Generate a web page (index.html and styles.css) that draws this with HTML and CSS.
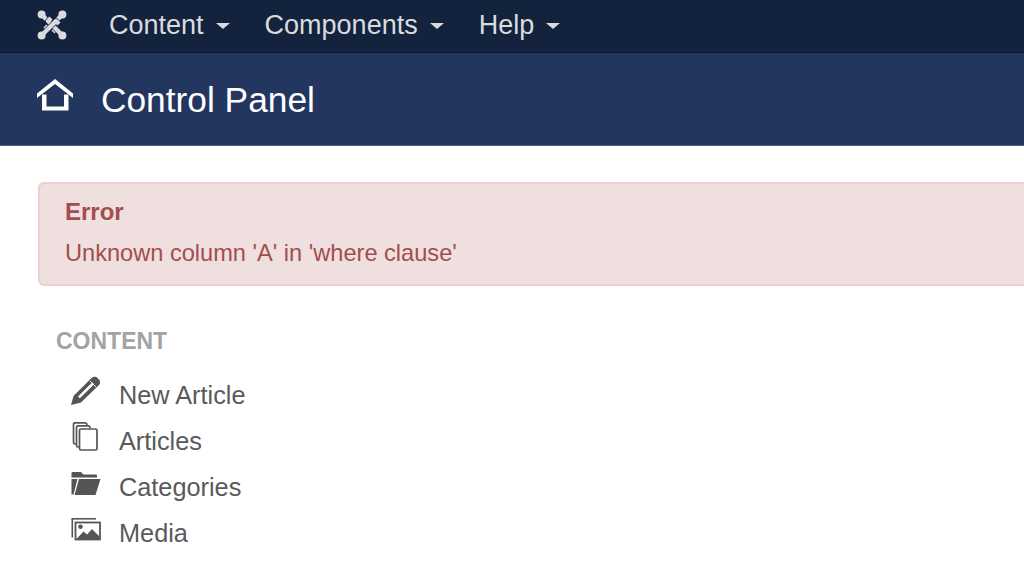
FILE: index.html
```html
<!DOCTYPE html>
<html lang="en">
<head>
    <meta charset="UTF-8">
    <title>Control Panel</title>
    <link rel="stylesheet" href="styles.css">
</head>
<body>
<div class="navbar">
    <a class="brand" href="#">
        <svg class="brand_icon" viewBox="0 0 30 30">
            <g fill="none" stroke-linejoin="round">
                <path d="M5 5 L19 19 L16 22" stroke="#14233d" stroke-width="5.6"/>
                <path d="M5 5 L19 19 L16 22" stroke="#d9dbdf" stroke-width="4.4"/>
                <path d="M25 5 L11 19 L8 16" stroke="#14233d" stroke-width="5.6"/>
                <path d="M25 5 L11 19 L8 16" stroke="#d9dbdf" stroke-width="4.4"/>
                <path d="M25 25 L11 11 L14 8" stroke="#14233d" stroke-width="5.6"/>
                <path d="M25 25 L11 11 L14 8" stroke="#d9dbdf" stroke-width="4.4"/>
                <path d="M5 25 L19 11 L22 14" stroke="#14233d" stroke-width="5.6"/>
                <path d="M5 25 L19 11 L22 14" stroke="#d9dbdf" stroke-width="4.4"/>
            </g>
            <g fill="#d9dbdf">
                <circle cx="4.6" cy="4.6" r="4"/>
                <circle cx="25.4" cy="4.6" r="4"/>
                <circle cx="4.6" cy="25.4" r="4"/>
                <circle cx="25.4" cy="25.4" r="4"/>
            </g>
        </svg>
    </a>
    <ul class="nav_menu">
        <li><a href="#">Content<span class="caret"></span></a></li>
        <li><a href="#">Components<span class="caret"></span></a></li>
        <li><a href="#">Help<span class="caret"></span></a></li>
    </ul>
</div>
<div class="subhead">
    <svg class="home_icon" viewBox="0 0 36 32">
        <path d="M0 14.5 L18 0 L36 14.5 V19 L18 5 L0 19 Z" fill="#fff"/>
        <path d="M5 15.5 H9.5 V27.5 H27 V15.5 H31.5 V31.5 H5 Z" fill="#fff"/>
    </svg>
    <h1 class="page_title">Control Panel</h1>
</div>
<div class="content">
    <div class="alert">
        <h4 class="alert_heading">Error</h4>
        <p class="alert_message">Unknown column 'A' in 'where clause'</p>
    </div>
    <div class="quick_icons">
        <h2 class="quick_title">CONTENT</h2>
        <ul class="quick_list">
            <li>
                <svg class="quick_icon" viewBox="0 0 30 30">
                    <path d="M0 29 L2.5 20 L20.5 2 Q23 0 25.5 1 L28.5 4 Q30 6.5 28 9 L10 26.5 Z M7 20.5 L8.8 22.3 L23 8.2 L21.2 6.4 Z" fill="#555" fill-rule="evenodd"/>
                    <path d="M19 5 L25 11" stroke="#fff" stroke-width="0.9"/>
                </svg>
                <a href="#">New Article</a>
            </li>
            <li>
                <svg class="quick_icon" viewBox="0 0 30 30">
                    <g fill="#fff" stroke="#555" stroke-width="1.7">
                        <path d="M6 22 H4 Q2.5 22 2.5 20.5 V2 Q2.5 0.8 4 0.8 H14 Q16 0.8 16 3"/>
                        <path d="M9 25 H7 Q5.5 25 5.5 23.5 V5 Q5.5 3.8 7 3.8 H17 Q19 3.8 19 6"/>
                        <rect x="8.5" y="7" width="17.5" height="21" rx="1.5"/>
                    </g>
                </svg>
                <a href="#">Articles</a>
            </li>
            <li>
                <svg class="quick_icon" viewBox="0 0 30 30">
                    <path d="M0.5 5 Q0.5 4 2 4 H10 L12.5 6.5 H25 Q26 6.5 26 7.5 V9.5 H0.5 Z" fill="#555"/>
                    <path d="M0.5 11 V26.5 H2.5 L6.5 11 Z" fill="#555"/>
                    <path d="M8 11 H29.5 L24.5 27 H3.5 Z" fill="#555"/>
                </svg>
                <a href="#">Categories</a>
            </li>
            <li>
                <svg class="quick_icon" viewBox="0 0 30 30">
                    <path d="M0.5 4.8 H25" fill="none" stroke="#555" stroke-width="1.6"/>
                    <path d="M1.3 4.8 V23.5" fill="none" stroke="#555" stroke-width="1.6"/>
                    <rect x="4.5" y="8.5" width="24.5" height="17" fill="none" stroke="#555" stroke-width="1.8"/>
                    <circle cx="9.5" cy="12.8" r="2.3" fill="#555"/>
                    <path d="M5.5 25 L12.5 17.5 L16 20.5 L21 15 L28 22 V25 Z" fill="#555"/>
                </svg>
                <a href="#">Media</a>
            </li>
        </ul>
    </div>
</div>
</body>
</html>
```

FILE: styles.css
```css
* {
    margin: 0;
    padding: 0;
    box-sizing: border-box;
}

html, body {
    height: 100%;
    overflow: hidden;
}

body {
    background-color: #fff;
    font-family: "Liberation Sans", Arial, sans-serif;
    color: #5a5a5a;
}

a {
    color: inherit;
    text-decoration: none;
}

ul {
    list-style: none;
}

.navbar {
    display: flex;
    align-items: center;
    height: 53px;
    padding: 0 0 2px 37px;
    background-color: #14233d;
    border-bottom: 1px solid #0e1a30;
}

.brand {
    display: flex;
    width: 72px;
}

.brand_icon {
    width: 30px;
    height: 30px;
}

.nav_menu {
    display: flex;
    gap: 35px;
    font-size: 27px;
    color: #d9dbdf;
}

.nav_menu a {
    display: flex;
    align-items: center;
}

.caret {
    width: 0;
    height: 0;
    margin-left: 12px;
    margin-top: 2px;
    border-top: 6px solid #d9dbdf;
    border-left: 7px solid transparent;
    border-right: 7px solid transparent;
}

.subhead {
    display: flex;
    align-items: center;
    gap: 28px;
    height: 93px;
    padding-left: 37px;
    background-color: #22365f;
    border-bottom: 1px solid #4b5d82;
}

.home_icon {
    width: 36px;
    height: 32px;
    margin-top: -9px;
}

.page_title {
    margin-top: 2px;
    font-size: 35.3px;
    font-weight: normal;
    color: #fff;
}

.content {
    padding: 36px 0 0 38px;
}

.alert {
    height: 104px;
    margin-right: -12px;
    padding: 13px 25px;
    background-color: #f0dfdf;
    border: 2px solid #e9d0d1;
    border-radius: 6px;
    color: #a34e4e;
}

.alert_heading {
    font-size: 24px;
    line-height: 30px;
    font-weight: bold;
}

.alert_message {
    margin-top: 11px;
    font-size: 23.6px;
    line-height: 30px;
}

.quick_icons {
    padding: 41px 0 0 18px;
}

.quick_title {
    font-size: 23px;
    line-height: 28px;
    font-weight: bold;
    color: #a3a3a3;
}

.quick_list {
    margin-top: 17px;
    padding-left: 15px;
    font-size: 25.3px;
}

.quick_list li {
    display: flex;
    align-items: center;
    gap: 18px;
    height: 46px;
}

.quick_icon {
    width: 30px;
    height: 30px;
    margin-top: -8px;
}
```
